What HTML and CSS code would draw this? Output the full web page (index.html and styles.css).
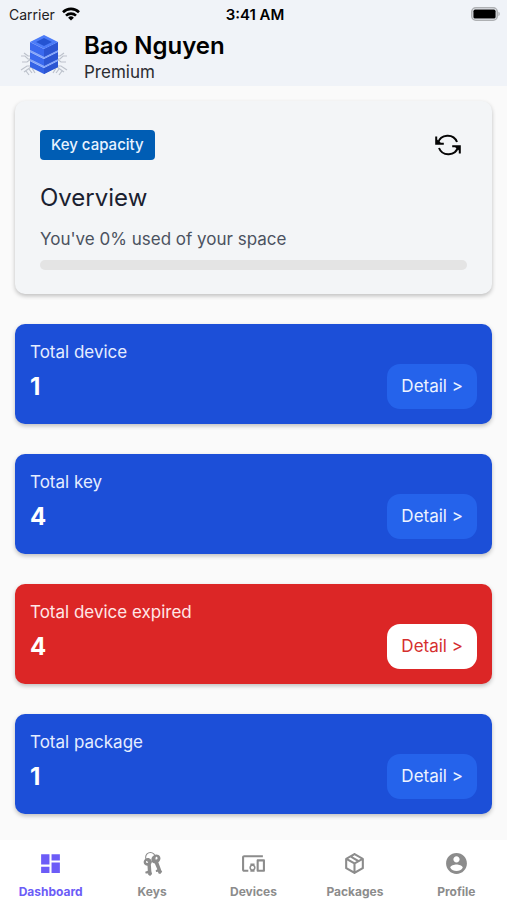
FILE: index.html
```html
<!DOCTYPE html>
<html lang="en">
<head>
<meta charset="utf-8">
<meta name="viewport" content="width=device-width, initial-scale=1">
<title>Dashboard</title>
<link rel="stylesheet" href="styles.css">
</head>
<body>
<div class="app">
  <header class="top">
    <div class="status">
      <span class="carrier">Carrier
        <svg class="wifi" viewBox="0 0 18 14" aria-hidden="true"><g fill="none" stroke="#000" stroke-width="2.6"><path d="M1 5.2a11.4 11.4 0 0 1 16 0"/><path d="M4 8.6a7.2 7.2 0 0 1 10 0"/></g><path d="M9 13.6 6.1 10.7a4.2 4.2 0 0 1 5.8 0z"/></svg>
      </span>
      <time class="clock">3:41 AM</time>
      <svg class="battery" viewBox="0 0 30 14" aria-hidden="true"><rect x="0.8" y="0.8" width="25.4" height="12.4" rx="4" fill="#f0f3f8" stroke="#aeb0b3" stroke-width="1.6"/><path d="M27.4 4.8a2.4 2.4 0 0 1 0 4.4z" fill="#aeb0b3"/><rect x="2.4" y="2.6" width="22.2" height="9" rx="1.6"/></svg>
    </div>
    <div class="user">
      <svg class="logo" viewBox="0 0 48 44" aria-hidden="true">
        <g fill="none" stroke="#bdc2cc" stroke-width="1.2"><path d="M1 22h4l3 3h4M4 19l4 3h4M2 28h5l4-3M1 36l6-4h5M4 38l7-5M9 35l3 4M6 37l3 4M12 34l3 5M47 22h-4l-3 3h-4M44 19l-4 3h-4M46 28h-5l-4-3M47 36l-6-4h-5M44 38l-7-5M39 35l-3 4M42 37l-3 4M36 34l-3 5"/></g>
        <path fill="#3563e6" d="M10 27v6l14 7 14-7v-6l-14 7z"/><path fill="#2c55d2" d="M24 34v6l14-7v-6z"/>
        <path fill="#86a6fa" d="M10 25v2l14 7 14-7v-2l-14 7z"/>
        <path fill="#3a69ee" d="M10 18v7l14 7 14-7v-7l-14 7z"/><path fill="#2c55d2" d="M24 25v7l14-7v-7z"/>
        <path fill="#86a6fa" d="M10 16v2l14 7 14-7v-2l-14 7z"/>
        <path fill="#3a69ee" d="M10 8v8l14 7 14-7V8l-14 7z"/><path fill="#2c55d2" d="M24 15v8l14-7V8z"/>
        <path fill="#4c7cf8" d="m10 8 14-7 14 7-14 7z"/><path fill="#2453d2" d="m16 8 8-4 8 4-8 4z"/>
      </svg>
      <div>
        <h1 class="name">Bao Nguyen</h1>
        <p class="plan">Premium</p>
      </div>
    </div>
  </header>

  <main class="content">
    <section class="card overview">
      <div class="overview-head">
        <span class="badge">Key capacity</span>
        <button class="refresh" type="button" aria-label="Refresh">
          <svg viewBox="0 0 26 22" aria-hidden="true"><g fill="none" stroke="#050505" stroke-width="2"><path d="M3 9A10 9.800 0 0 1 22 8"/><path d="M23 13A10 9.800 0 0 1 4 14"/><path d="M1.200 2.500v7.300h7.600"/><path d="M24.800 19.500v-7.300h-7.600"/></g><path d="m2 5.500 4 3.500H2zM24 16.500l-4-3.500h4z" fill="#050505"/></svg>
        </button>
      </div>
      <h2 class="title">Overview</h2>
      <label class="usage" for="space">You've 0% used of your space</label>
      <progress class="bar" id="space" value="0" max="100"></progress>
    </section>

    <section class="card stat">
      <h3 class="stat-label">Total device</h3>
      <div class="stat-row"><strong class="count">1</strong><button class="detail" type="button">Detail &gt;</button></div>
    </section>
    <section class="card stat">
      <h3 class="stat-label">Total key</h3>
      <div class="stat-row"><strong class="count">4</strong><button class="detail" type="button">Detail &gt;</button></div>
    </section>
    <section class="card stat expired">
      <h3 class="stat-label">Total device expired</h3>
      <div class="stat-row"><strong class="count">4</strong><button class="detail" type="button">Detail &gt;</button></div>
    </section>
    <section class="card stat">
      <h3 class="stat-label">Total package</h3>
      <div class="stat-row"><strong class="count">1</strong><button class="detail" type="button">Detail &gt;</button></div>
    </section>
  </main>

  <nav class="tabs">
    <a class="tab active" href="#dashboard" aria-current="page">
      <svg viewBox="0 0 24 24" aria-hidden="true"><path d="M3 13h8V3H3v10zm0 8h8v-6H3v6zm10 0h8V11h-8v10zm0-18v6h8V3h-8z"/></svg>
      Dashboard</a>
    <a class="tab" href="#keys">
      <svg viewBox="0 0 24 24" aria-hidden="true"><circle cx="10" cy="6" r="4.600" fill="none" stroke="currentColor" stroke-width="1"/><path fill-rule="evenodd" d="M13.300 4.200c2-1.500 5-.8 6 1.400 1 2-.1 4.200-1.700 5.200l2.800 7.700.9 1.500-1.900 2-1.600-.5-.6-1.600-1.700.3-.5-1.600 1.600-1-2.400-5.700c-2-.2-3.700-2.100-3.200-4.500.2-1.300 1-2.600 2.300-3.200zm2.200 1.400a1.300 1.300 0 1 0 .1 2.600 1.300 1.300 0 0 0-.1-2.600z"/><path fill-rule="evenodd" d="M5 7.600c1.700-1.300 4.400-1 5.600.8 1 1.500.8 3.200-.2 4.500l.5 6.500.7 2.700-1.900 1.800-1.800-1-.1-1.400-2.400.2-.4-1.700 2.500-1-.3-4.800c-2-.2-3.600-1.400-3.700-3.400 0-1.300.6-2.500 1.500-3.200zm1.800 1.700a1.100 1.100 0 1 0 .1 2.200 1.100 1.100 0 0 0-.1-2.200z"/></svg>
      Keys</a>
    <a class="tab" href="#devices">
      <svg viewBox="0 0 24 24" aria-hidden="true"><path d="M3 6h18V4H3c-1.100 0-2 .9-2 2v12c0 1.100.9 2 2 2h4v-2H3V6zm10 6H9v1.780c-.61.55-1 1.330-1 2.220s.39 1.670 1 2.220V20h4v-1.780c.61-.55 1-1.340 1-2.220s-.39-1.670-1-2.220V12zm-2 5.500c-.83 0-1.500-.67-1.500-1.500s.67-1.500 1.500-1.500 1.500.67 1.500 1.500-.67 1.500-1.500 1.500zM22 8h-6c-.5 0-1 .5-1 1v10c0 .5.5 1 1 1h6c.5 0 1-.5 1-1V9c0-.5-.5-1-1-1zm-1 10h-4v-8h4v8z"/></svg>
      Devices</a>
    <a class="tab" href="#packages">
      <svg viewBox="0 0 24 24" aria-hidden="true"><path d="M21,16.5C21,16.88 20.79,17.21 20.47,17.38L12.57,21.82C12.41,21.94 12.21,22 12,22C11.79,22 11.59,21.94 11.43,21.82L3.53,17.38C3.21,17.21 3,16.88 3,16.5V7.5C3,7.12 3.21,6.79 3.53,6.62L11.43,2.18C11.59,2.06 11.79,2 12,2C12.21,2 12.41,2.06 12.57,2.18L20.47,6.62C20.79,6.79 21,7.12 21,7.5V16.5M12,4.15L10.11,5.22L16,8.61L17.96,7.5L12,4.15M6.04,7.5L12,10.85L13.96,9.75L8.08,6.35L6.04,7.5M5,15.91L11,19.29V12.58L5,9.21V15.91M19,15.91V9.21L13,12.58V19.29L19,15.91Z"/></svg>
      Packages</a>
    <a class="tab" href="#profile">
      <svg viewBox="0 0 24 24" aria-hidden="true"><path d="M12 2C6.480 2 2 6.480 2 12s4.480 10 10 10 10-4.480 10-10S17.520 2 12 2zm0 3c1.660 0 3 1.340 3 3s-1.340 3-3 3-3-1.340-3-3 1.340-3 3-3zm0 14.200c-2.500 0-4.710-1.280-6-3.220.03-1.990 4-3.080 6-3.080 1.990 0 5.970 1.090 6 3.080-1.290 1.940-3.500 3.220-6 3.220z"/></svg>
      Profile</a>
  </nav>
</div>
</body>
</html>
```
FILE: styles.css
```css
* { box-sizing: border-box; }
body, h1, h2, h3, p { margin: 0; }
body {
  font-family: Inter, "Liberation Sans", sans-serif;
  background: #fafafa;
  color: #000;
}
button { font: inherit; border: 0; padding: 0; cursor: pointer; }
svg { display: block; }

.app {
  min-height: 100vh;
  display: flex;
  flex-direction: column;
}

.top { background: #f0f3f8; padding-bottom: 2px; }
.status {
  display: grid;
  grid-template-columns: 1fr auto 1fr;
  align-items: center;
  height: 28px;
  padding: 0 6px 0 9px;
}
.carrier { display: flex; align-items: center; gap: 7px; font-size: 14px; color: #1f2124; }
.wifi { width: 18px; height: 14px; }
.clock { font-size: 15px; font-weight: 600; }
.battery { width: 30px; height: 14px; justify-self: end; }
.user { display: flex; align-items: center; gap: 16px; padding: 0 20px; height: 56px; }
.logo { width: 48px; height: 44px; }
.name { font-size: 24px; line-height: 32px; font-weight: 600; }
.plan { font-size: 17px; line-height: 20px; color: #2b2d31; }

.content {
  flex: 1;
  display: flex;
  flex-direction: column;
  gap: 30px;
  padding: 15px 15px 24px;
}
.card {
  border-radius: 10px;
  box-shadow: 0 2px 4px rgba(0, 0, 0, 0.24);
}
.overview { background: #f3f5f7; padding: 29px 25px 24px; }
.overview-head { display: flex; justify-content: space-between; align-items: center; }
.badge {
  background: #005db4;
  color: #e9f3ff;
  border-radius: 4px;
  padding: 0 11px;
  font-size: 15px;
  line-height: 30px;
  font-weight: 500;
}
.refresh { background: none; margin-right: 6px; }
.refresh svg { width: 26px; height: 22px; }
.title { margin-top: 22px; font-size: 24px; line-height: 32px; font-weight: 400; color: #1a2130; }
.usage { display: block; margin-top: 14px; font-size: 17px; line-height: 22px; color: #4b5260; }
.bar {
  display: block;
  appearance: none;
  width: 100%;
  height: 10px;
  margin-top: 10px;
  border: 0;
  border-radius: 5px;
  overflow: hidden;
  background: #e4e4e4;
}
.bar::-webkit-progress-bar { background: #e4e4e4; }
.bar::-webkit-progress-value { background: #005db4; }

.stat { background: #1c4fd8; color: #fff; padding: 16px 15px 15px; }
.stat-label { font-size: 17px; line-height: 24px; font-weight: 400; color: #e6edff; }
.stat-row { display: flex; justify-content: space-between; align-items: center; }
.count { font-size: 24px; font-weight: 700; }
.detail {
  background: #2563eb;
  color: #edf3ff;
  border-radius: 13px;
  padding: 0 14px;
  font-size: 17px;
  line-height: 45px;
}
.expired { background: #dc2626; }
.expired .stat-label { color: #ffe7e7; }
.expired .detail { background: #fff; color: #d52f2f; }

.tabs {
  display: grid;
  grid-template-columns: repeat(5, 1fr);
  background: #fff;
  height: 60px;
}
.tab {
  display: flex;
  flex-direction: column;
  align-items: center;
  gap: 8px;
  padding-top: 11px;
  font-size: 12px;
  line-height: 16px;
  font-weight: 700;
  color: #8c8c8c;
  text-decoration: none;
}
.tab svg { width: 25px; height: 25px; fill: currentColor; }
.active { color: #6c5cf7; }
```
